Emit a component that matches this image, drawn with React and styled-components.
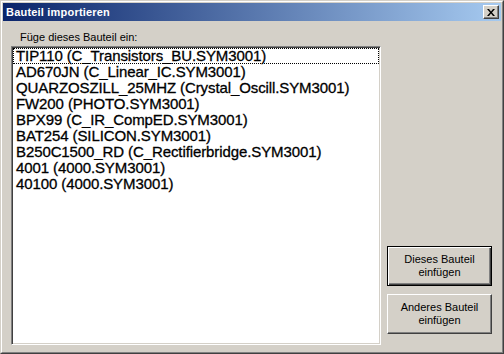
import React from 'react';
import styled, { createGlobalStyle } from 'styled-components';

const GlobalStyle = createGlobalStyle`
  html, body {
    margin: 0;
    padding: 0;
    background: #d4d0c8;
  }
`;

const Window = styled.div`
  width: 504px;
  height: 354px;
  box-sizing: border-box;
  background: #d4d0c8;
  border: 1px solid;
  border-color: #d4d0c8 #404040 #404040 #d4d0c8;
  display: flex;
  flex-direction: column;
  font-family: "Liberation Sans", Arial, sans-serif;
`;

const Frame = styled.div`
  flex: 1;
  display: flex;
  flex-direction: column;
  border: 1px solid;
  border-color: #ffffff #808080 #808080 #ffffff;
  padding: 1px;
`;

const TitleBar = styled.div`
  height: 18px;
  display: flex;
  align-items: center;
  justify-content: space-between;
  padding: 0 2px 0 3px;
  background: linear-gradient(to right, #0a246a, #a6caf0);
  color: #ffffff;
  font-weight: bold;
  font-size: 11px;
  letter-spacing: 0.2px;
`;

const CloseButton = styled.div`
  width: 16px;
  height: 14px;
  box-sizing: border-box;
  background: #d4d0c8;
  border: 1px solid;
  border-color: #ffffff #404040 #404040 #ffffff;
  box-shadow: inset -1px -1px 0 #808080;
  display: flex;
  align-items: center;
  justify-content: center;
`;

const Body = styled.div`
  flex: 1;
  display: grid;
  grid-template-columns: 370px 105px;
  column-gap: 6px;
  padding: 10px 9px 6px 8px;
`;

const LeftColumn = styled.div`
  display: flex;
  flex-direction: column;
`;

const Label = styled.div`
  font-size: 11px;
  line-height: 13px;
  color: #000;
  padding-left: 9px;
  height: 15px;
`;

const ListBox = styled.div`
  flex: 1;
  background: #ffffff;
  border: 1px solid;
  border-color: #808080 #ffffff #ffffff #808080;
  box-shadow: inset 1px 1px 0 #404040, inset -1px -1px 0 #d4d0c8;
  padding: 1px;
`;

const Item = styled.div`
  height: 16px;
  box-sizing: border-box;
  padding-left: 2px;
  font-size: 15px;
  line-height: 14px;
  letter-spacing: -0.1px;
  color: #000;
  -webkit-text-stroke: 0.3px #000;
  white-space: nowrap;
  border: 1px dotted ${({ $focused }) => ($focused ? '#000' : 'transparent')};
`;

const RightColumn = styled.div`
  display: flex;
  flex-direction: column;
  justify-content: flex-end;
  gap: 8px;
  padding-bottom: 11px;
`;

const Button = styled.div`
  height: 40px;
  box-sizing: border-box;
  background: #d4d0c8;
  border: 1px solid;
  border-color: ${({ $default }) =>
    $default ? '#000' : '#ffffff #404040 #404040 #ffffff'};
  box-shadow: ${({ $default }) =>
    $default
      ? 'inset 1px 1px 0 #ffffff, inset -1px -1px 0 #404040, inset -2px -2px 0 #808080'
      : 'inset -1px -1px 0 #808080'};
  display: flex;
  align-items: center;
  justify-content: center;
  text-align: center;
  font-size: 11px;
  line-height: 13px;
  color: #000;
`;

const items = [
  'TIP110 (C_Transistors_BU.SYM3001)',
  'AD670JN (C_Linear_IC.SYM3001)',
  'QUARZOSZILL_25MHZ (Crystal_Oscill.SYM3001)',
  'FW200 (PHOTO.SYM3001)',
  'BPX99 (C_IR_CompED.SYM3001)',
  'BAT254 (SILICON.SYM3001)',
  'B250C1500_RD (C_Rectifierbridge.SYM3001)',
  '4001 (4000.SYM3001)',
  '40100 (4000.SYM3001)',
];

export default function App() {
  return (
    <>
      <GlobalStyle />
      <Window>
        <Frame>
          <TitleBar>
            <span>Bauteil importieren</span>
            <CloseButton>
              <svg width="8" height="7" viewBox="0 0 8 7">
                <path d="M0 0h2l2 2.5L6 0h2L5 3.5 8 7H6L4 4.5 2 7H0l3-3.5z" fill="#000" />
              </svg>
            </CloseButton>
          </TitleBar>
          <Body>
            <LeftColumn>
              <Label>Füge dieses Bauteil ein:</Label>
              <ListBox>
                {items.map((text, i) => (
                  <Item key={text} $focused={i === 0}>
                    {text}
                  </Item>
                ))}
              </ListBox>
            </LeftColumn>
            <RightColumn>
              <Button $default>
                Dieses Bauteil
                <br />
                einfügen
              </Button>
              <Button>
                Anderes Bauteil
                <br />
                einfügen
              </Button>
            </RightColumn>
          </Body>
        </Frame>
      </Window>
    </>
  );
}
